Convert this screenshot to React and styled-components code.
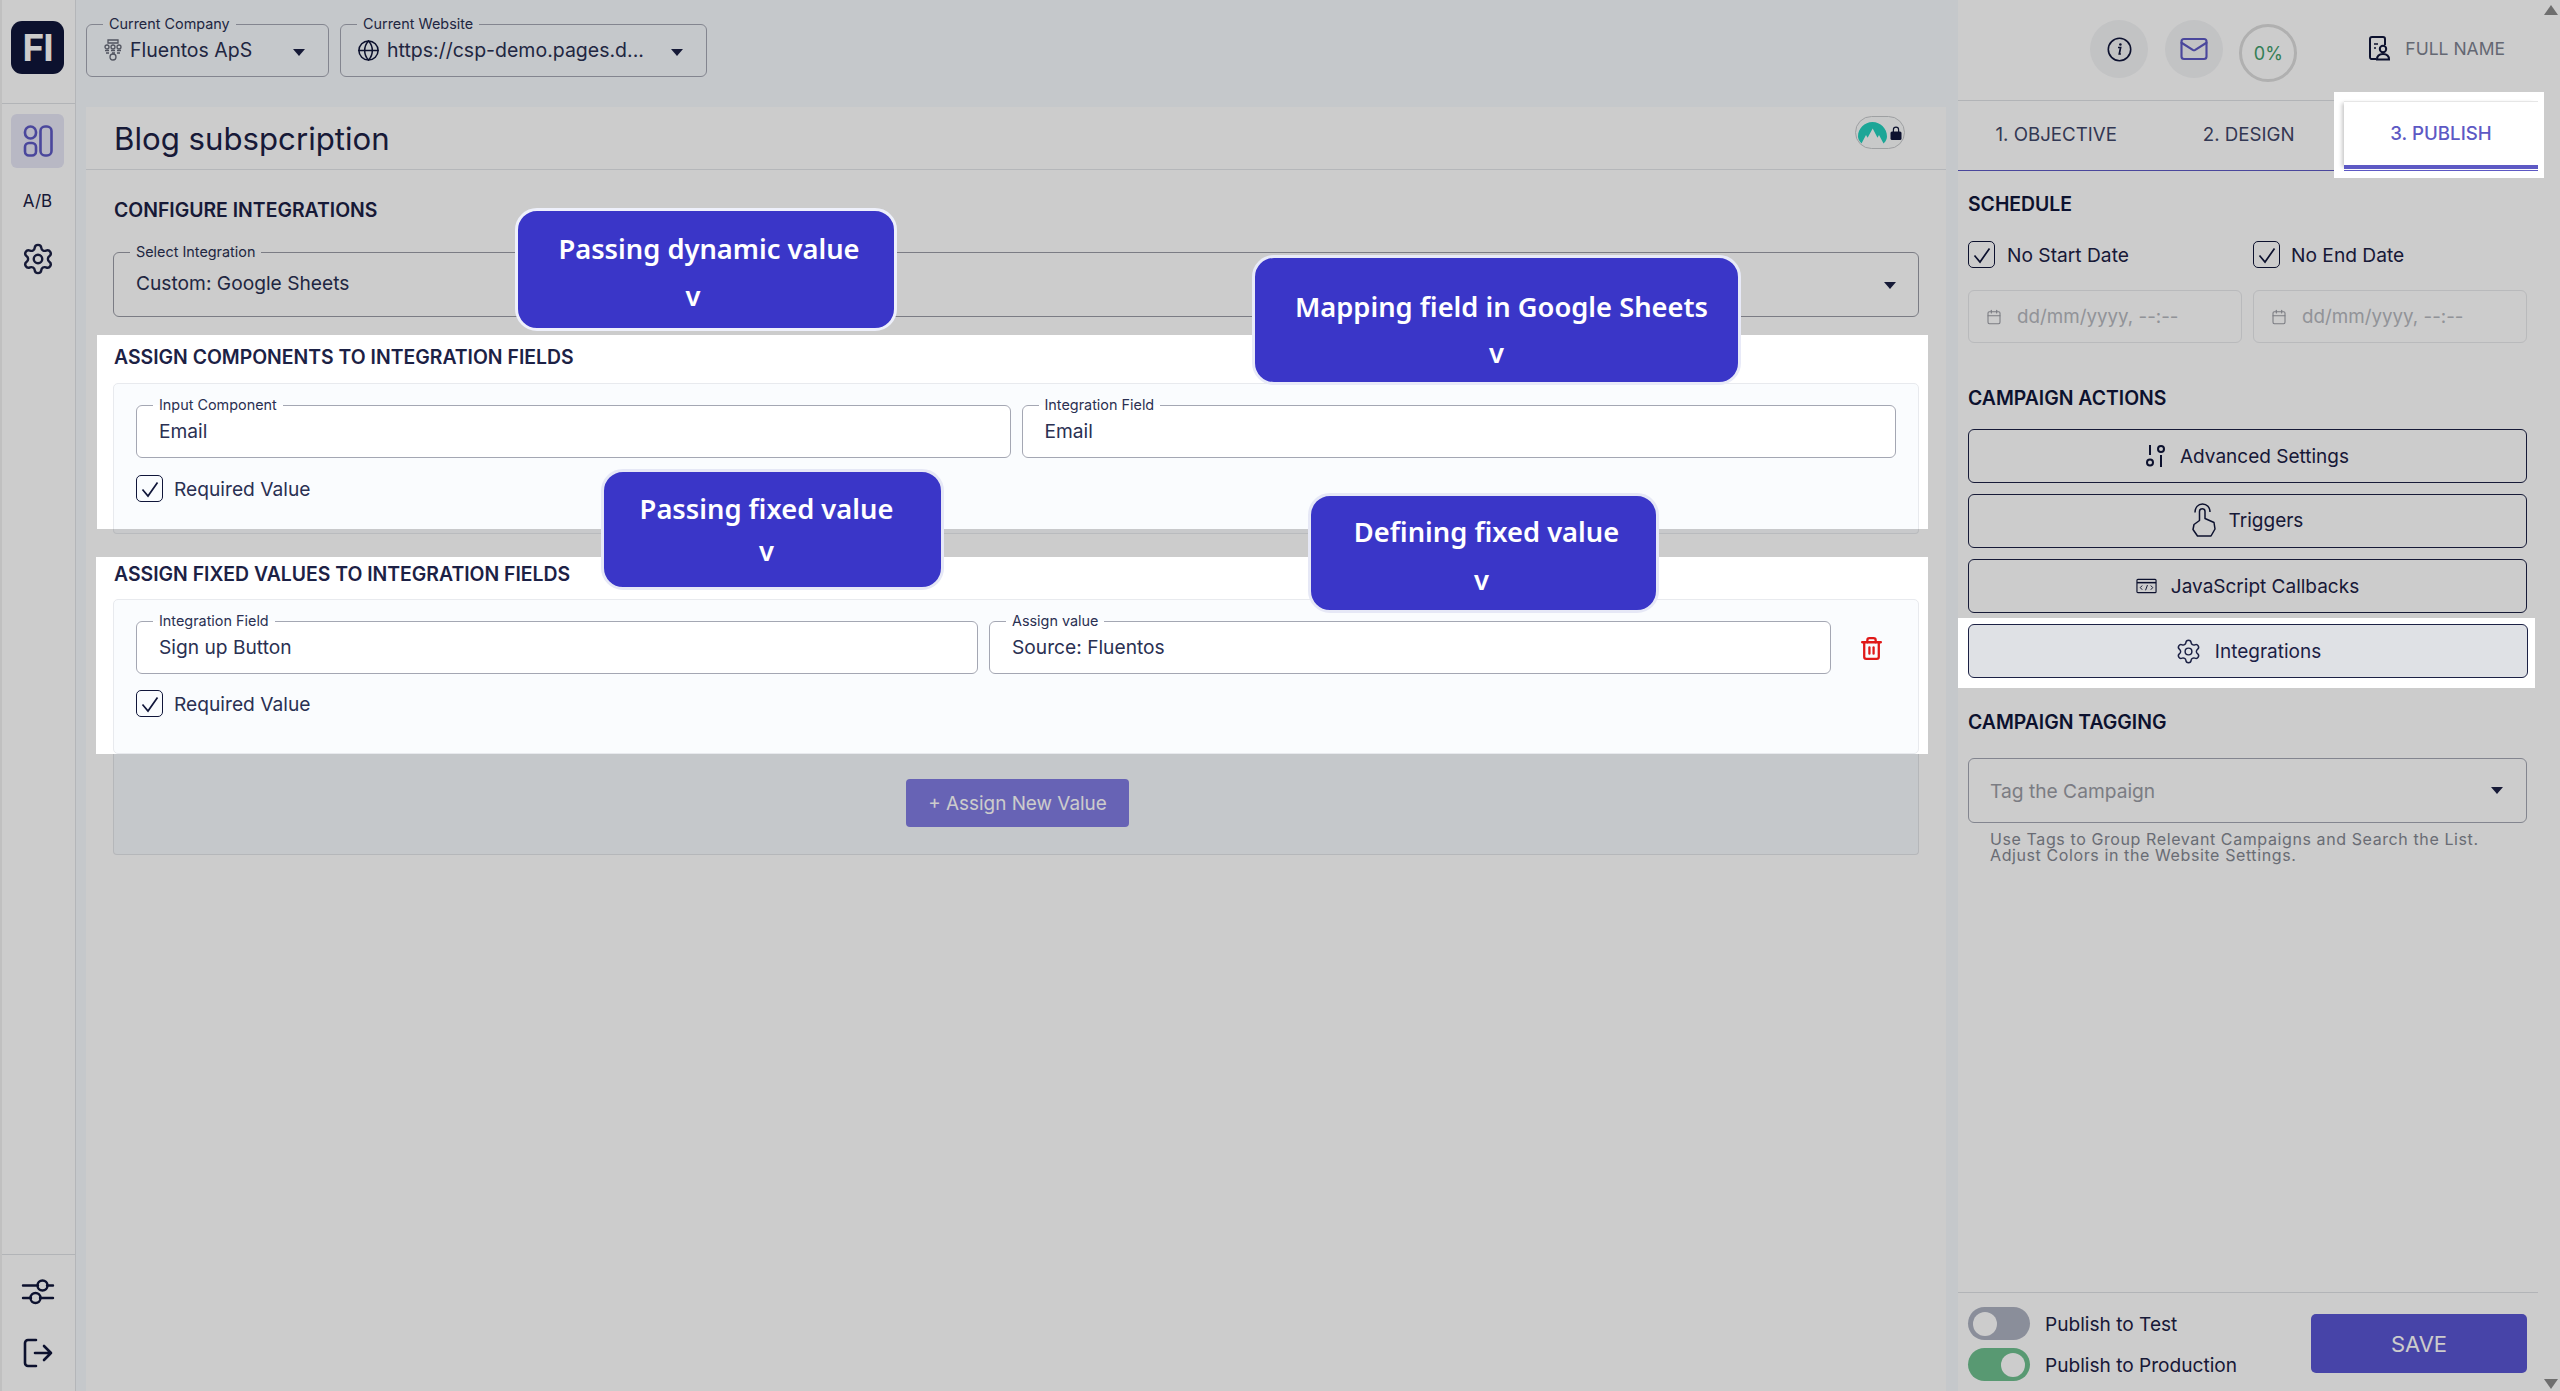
import React from "react";
import styled, { createGlobalStyle } from "styled-components";
import { Settings, Mail, Globe, Trash2, Calendar } from "lucide-react";

const Global = createGlobalStyle`
  html, body { margin: 0; padding: 0; background: #fff; }
  body { font-family: Inter, "Noto Sans", sans-serif; color: #1c2145; overflow: hidden; }
  * { box-sizing: border-box; }
  fieldset { min-width: 0; }
`;

const Page = styled.div`
  position: relative;
  width: 2560px;
  height: 1391px;
  display: flex;
  overflow: hidden;
  background: #fff;
`;
const Dim = styled.div`
  position: absolute;
  inset: 0;
  z-index: 1;
  background: rgba(0, 0, 0, 0.2);
  pointer-events: none;
`;
const Sidebar = styled.aside`
  width: 76px;
  flex: none;
  display: flex;
  flex-direction: column;
  border-left: 2px solid #f0f0f0;
  border-right: 1px solid #e2e4e8;
`;
const LogoArea = styled.div`
  height: 104px;
  padding: 21px 0 0 9px;
  border-bottom: 1px solid #dfe1e5;
`;
const Logo = styled.div`
  width: 53px;
  height: 53px;
  border-radius: 11px;
  background: #10163a;
  color: #fff;
  display: flex;
  align-items: center;
  justify-content: center;
  font-size: 37px;
  font-weight: 700;
  letter-spacing: -1px;
`;
const Nav = styled.nav`
  flex: 1;
  padding: 10px 0 0 9px;
  display: flex;
  flex-direction: column;
`;
const ActiveNav = styled.div`
  width: 53px;
  height: 54px;
  border-radius: 6px;
  background: #e6e6f6;
  display: flex;
  align-items: center;
  justify-content: center;
`;
const AbMark = styled.div`
  width: 53px;
  margin-top: 23px;
  text-align: center;
  font-size: 17px;
  line-height: 20px;
  color: #1c2145;
`;
const GearSlot = styled.div`
  width: 53px;
  margin-top: 31px;
  display: flex;
  justify-content: center;
  color: #1c2145;
`;
const SideBottom = styled.div`
  height: 137px;
  border-top: 1px solid #dfe1e5;
  padding: 23px 0 0 8px;
  display: flex;
  flex-direction: column;
  gap: 32px;
`;
const SideIcon = styled.div`
  width: 56px;
  display: flex;
  justify-content: center;
  color: #10163a;
`;

const MainColumn = styled.main`
  width: 1882px;
  flex: none;
  display: flex;
  flex-direction: column;
  background: #f7fafe;
`;
const TopBar = styled.header`
  height: 107px;
  flex: none;
  padding: 16px 0 0 10px;
  display: flex;
  align-items: flex-start;
  gap: 11px;
`;
const Field = styled.fieldset`
  margin: ${(p) => p.$mt || 0}px 0 0;
  padding: 0 16px;
  height: ${(p) => p.$h || 61}px;
  width: ${(p) => (p.$w ? `${p.$w}px` : "auto")};
  flex: ${(p) => (p.$w ? "none" : "1")};
  border: 1px solid ${(p) => p.$line || "#a4a7b3"};
  border-radius: 6px;
  background: ${(p) => p.$bg || "transparent"};
  position: relative;
`;
const Legend = styled.legend`
  padding: 0 6px;
  margin: 0;
  font-size: 14.4px;
  line-height: 16px;
  color: #2a3052;
  white-space: nowrap;
`;
const FieldBody = styled.div`
  display: flex;
  align-items: center;
  gap: 7px;
  height: ${(p) => p.$h || 36}px;
  padding-left: ${(p) => p.$pad ?? 6}px;
  font-size: ${(p) => p.$fs || 19.2}px;
  color: #2a3052;
  white-space: nowrap;
`;
const Caret = styled.span`
  position: absolute;
  right: ${(p) => p.$r}px;
  top: ${(p) => p.$t}px;
  width: 0;
  height: 0;
  border-left: 6px solid transparent;
  border-right: 6px solid transparent;
  border-top: 7px solid #1c2145;
`;

const MainCard = styled.section`
  flex: 1;
  margin: 0 12px 0 10px;
  background: #fff;
  display: flex;
  flex-direction: column;
`;
const CardHead = styled.div`
  height: 63px;
  flex: none;
  padding: 0 41px 0 28px;
  display: flex;
  align-items: center;
  justify-content: space-between;
  border-bottom: 1px solid #e3e5e9;
`;
const Title = styled.h1`
  margin: 2px 0 0;
  font-size: 31.2px;
  font-weight: 400;
  color: #1c2145;
`;
const Badge = styled.div`
  width: 50px;
  height: 33px;
  margin-top: -11px;
  border: 1.5px solid #c6c8cb;
  border-radius: 17px;
  background: #fbfcfc;
  display: flex;
  align-items: center;
  justify-content: center;
  gap: 3px;
`;
const Content = styled.div`
  padding: 0 27px;
`;
const Heading = styled.h2`
  margin: ${(p) => p.$mt || 0}px 0 0;
  font-size: 19.4px;
  line-height: 22px;
  font-weight: 600;
  color: ${(p) => p.$c || "#1c2145"};
  padding-left: ${(p) => p.$pl || 0}px;
  white-space: nowrap;
`;
const Highlight = styled.div`
  position: relative;
  z-index: 2;
  background: #fff;
  height: ${(p) => p.$h}px;
  margin: ${(p) => p.$mt}px -9px 0 -${(p) => p.$ml}px;
  padding: ${(p) => p.$pt}px 9px 0 ${(p) => p.$ml}px;
  overflow: hidden;
`;
const RowCard = styled.div`
  margin-top: ${(p) => p.$mt}px;
  height: ${(p) => p.$h}px;
  padding: 21px 22px 0;
  background: #fafcfe;
  border: 1px solid #e8eaee;
  border-radius: 5px;
  position: relative;
`;
const FieldRow = styled.div`
  display: flex;
  gap: 11px;
  align-items: flex-start;
  margin-top: -8px;
`;
const TrashSlot = styled.div`
  width: 54px;
  flex: none;
  display: flex;
  justify-content: center;
  padding: 23px 0 0 4px;
  color: #e01919;
`;
const CheckRow = styled.label`
  display: flex;
  align-items: center;
  gap: ${(p) => p.$gap || 11}px;
  margin-top: ${(p) => p.$mt || 0}px;
  font-size: 19.2px;
  color: ${(p) => p.$c || "#2a3052"};
`;
const Box = styled.span`
  width: 27px;
  height: 27px;
  flex: none;
  border: 1.5px solid #10163a;
  border-radius: 5px;
  background: transparent;
  display: flex;
  align-items: center;
  justify-content: center;
`;
const CardTail = styled.div`
  height: 5px;
  background: #fafcfe;
  border: 1px solid #e8eaee;
  border-top: 0;
  border-radius: 0 0 4px 4px;
`;
const AddBox = styled.div`
  height: 101px;
  background: #f7fafe;
  border: 1px solid #e3e5e9;
  border-top: 0;
  border-radius: 0 0 4px 4px;
  padding-top: 25px;
  display: flex;
  justify-content: center;
`;
const AddButton = styled.button`
  width: 223px;
  height: 48px;
  border: 0;
  border-radius: 4px;
  margin-left: 3px;
  background: #817ce3;
  color: #fff;
  font-family: inherit;
  font-size: 18.9px;
`;

const RightPanel = styled.aside`
  flex: 1;
  display: flex;
  background: #fff;
`;
const RightInner = styled.div`
  width: 580px;
  flex: none;
  display: flex;
  flex-direction: column;
`;
const RightTop = styled.div`
  height: 101px;
  flex: none;
  border-bottom: 1px solid #dfe1e5;
  padding: 20px 33px 0 0;
  display: flex;
  justify-content: flex-end;
  align-items: flex-start;
`;
const RoundTile = styled.div`
  width: 58px;
  height: 58px;
  margin-right: ${(p) => p.$mr}px;
  border-radius: 50%;
  background: #f3f4f6;
  display: flex;
  align-items: center;
  justify-content: center;
`;
const Progress = styled.div`
  width: 58px;
  height: 58px;
  margin-top: 4px;
  border-radius: 50%;
  border: 3px solid #dcdcdc;
  display: flex;
  align-items: center;
  justify-content: center;
  font-size: 18px;
  color: #3f9e6c;
`;
const User = styled.div`
  margin-left: 71px;
  height: 58px;
  display: flex;
  align-items: center;
  gap: 13px;
  font-size: 17.5px;
  color: #7d8290;
  white-space: nowrap;
  transform: translateY(-1px);
`;
const TabBar = styled.div`
  height: 70px;
  flex: none;
  display: flex;
  border-bottom: 1px solid #5d59c4;
`;
const Tab = styled.div`
  width: 193px;
  display: flex;
  align-items: center;
  justify-content: center;
  padding: 0 0 2px ${(p) => p.$pl}px;
  font-size: 18.7px;
  color: #3f4668;
`;
const TabGlow = styled.div`
  position: relative;
  z-index: 2;
  background: #fff;
  margin: -9px -6px -8px -1px;
  padding: 9px 6px 7px 10px;
  width: 210px;
  flex: none;
`;
const ActiveTab = styled.div`
  height: 68px;
  border-top: 1px solid #e6e6e6;
  border-bottom: 4px solid #5d59c4;
  box-shadow: -4px 0 4px -2px rgba(0, 0, 0, 0.22);
  display: flex;
  align-items: center;
  justify-content: center;
  font-size: 18.7px;
  font-weight: 500;
  color: #5d59c4;
`;
const ActiveRule = styled.div`
  height: 1px;
  margin-top: 1px;
  background: #5d59c4;
`;
const Body = styled.div`
  padding: 0 11px 0 10px;
  flex: 1;
  display: flex;
  flex-direction: column;
`;
const TwoCols = styled.div`
  display: flex;
  gap: 11px;
  margin-top: ${(p) => p.$mt}px;
`;
const Col = styled.div`
  flex: 1;
`;
const DateInput = styled.div`
  height: 53px;
  border: 1px solid #e8e9ec;
  border-radius: 6px;
  display: flex;
  align-items: center;
  gap: 15px;
  padding-left: 17px;
  font-size: 18.8px;
  color: #b6b8be;
`;
const Actions = styled.div`
  margin-top: 20px;
  display: flex;
  flex-direction: column;
  gap: 11px;
`;
const ActionButton = styled.button`
  width: 100%;
  height: 54px;
  border: 1.5px solid #1c2145;
  border-radius: 6px;
  background: ${(p) => (p.$active ? "#dfe1e5" : "transparent")};
  font-family: inherit;
  font-size: 19px;
  color: #1c2145;
  display: flex;
  align-items: center;
  justify-content: center;
  gap: ${(p) => p.$gap}px;
  padding: 0 0 ${(p) => p.$pb || 0}px;
`;
const ActionGlow = styled.div`
  position: relative;
  z-index: 2;
  background: #fff;
  margin: -6px -8px -10px -10px;
  padding: 6px 7px 10px 10px;
`;
const TagSelect = styled.div`
  position: relative;
  height: 65px;
  margin-top: 25px;
  border: 1px solid #a4a7b3;
  border-radius: 6px;
  display: flex;
  align-items: center;
  padding-left: 21px;
  font-size: 19.2px;
  color: #9a9ca4;
`;
const Help = styled.p`
  margin: 8px 0 0;
  padding-left: 22px;
  font-size: 16px;
  line-height: 16px;
  letter-spacing: 0.6px;
  color: #848892;
`;
const Footer = styled.div`
  margin-top: auto;
  height: 99px;
  flex: none;
  border-top: 1px solid #dfe1e5;
  padding: 14px 11px 0 10px;
  display: flex;
  justify-content: space-between;
`;
const ToggleStack = styled.div`
  display: flex;
  flex-direction: column;
  gap: 8px;
`;
const ToggleRow = styled.div`
  display: flex;
  align-items: center;
  gap: 15px;
  font-size: 19.1px;
  height: 33px;
  color: #1c2145;
`;
const Toggle = styled.span`
  width: 62px;
  height: 33px;
  border-radius: 17px;
  padding: 0 5px;
  display: flex;
  align-items: center;
  justify-content: ${(p) => (p.$on ? "flex-end" : "flex-start")};
  background: ${(p) => (p.$on ? "#6fc08f" : "#adb2c1")};
`;
const Knob = styled.span`
  width: 24px;
  height: 24px;
  border-radius: 50%;
  background: #fff;
`;
const SaveButton = styled.button`
  width: 216px;
  height: 59px;
  margin-top: 7px;
  border: 0;
  border-radius: 5px;
  background: #5955d2;
  color: #fff;
  font-family: inherit;
  font-size: 22px;
`;
const Scrollbar = styled.div`
  width: 15px;
  margin-left: 5px;
  padding: 5px 0 2px;
  display: flex;
  flex-direction: column;
  justify-content: space-between;
  align-items: center;
`;
const Arrow = styled.span`
  width: 0;
  height: 0;
  border-left: 7px solid transparent;
  border-right: 7px solid transparent;
  border-${(p) => (p.$up ? "bottom" : "top")}: 10px solid #8a8a8a;
`;
const Callout = styled.div`
  position: absolute;
  z-index: 3;
  left: ${(p) => p.$x}px;
  top: ${(p) => p.$y}px;
  width: ${(p) => p.$w}px;
  height: ${(p) => p.$h}px;
  border: 3px solid ${(p) => p.$edge};
  border-radius: 22px;
  background: #3a36c8;
  color: #fff;
  font-family: "Noto Sans", "Open Sans", sans-serif;
  font-weight: 600;
  font-size: 27.3px;
  text-align: center;
  white-space: nowrap;
`;
const CalloutLine = styled.div`
  position: absolute;
  top: ${(p) => p.$top}px;
  left: 0;
  right: 0;
  line-height: 34px;
  padding: 0 ${(p) => (p.$shift < 0 ? -2 * p.$shift : 0)}px 0 ${(p) => (p.$shift > 0 ? 2 * p.$shift : 0)}px;
`;

const Check = () => (
  <svg width="20" height="20" viewBox="0 0 20 20" fill="none" stroke="#10163a" strokeWidth="1.7">
    <path d="M2.5 10.5 L8 17 L17.5 3.5" />
  </svg>
);
const ComboIcon = () => (
  <svg width="34" height="34" viewBox="0 0 34 34" fill="none" stroke="#5d59c4" strokeWidth="2.6">
    <rect x="4" y="2.5" width="11" height="12" rx="5.5" />
    <rect x="4" y="19" width="11" height="12.5" rx="4" />
    <rect x="19.5" y="2.5" width="11" height="29" rx="4.5" />
  </svg>
);
const SlidersIcon = () => (
  <svg width="34" height="28" viewBox="0 0 34 28" fill="none" stroke="currentColor" strokeWidth="2.4" strokeLinecap="round">
    <path d="M2 7.5h15M26 7.5h6M2 20h8M19 20h13" />
    <circle cx="21.5" cy="7.5" r="5" />
    <circle cx="14.500" cy="20" r="5" />
  </svg>
);
const LogoutIcon = () => (
  <svg width="32" height="30" viewBox="0 0 32 30" fill="none" stroke="currentColor" strokeWidth="2.6" strokeLinecap="round" strokeLinejoin="round">
    <path d="M14 2H6a3 3 0 0 0-3 3v20a3 3 0 0 0 3 3h8" />
    <path d="M13 15h16M22 8l7 7-7 7" />
  </svg>
);
const OrgIcon = () => (
  <svg width="20" height="24" viewBox="0 0 20 24" fill="none" stroke="#666a78" strokeWidth="1.3">
    <path d="M5 2h10v3H5z" />
    <circle cx="4" cy="9" r="2" />
    <circle cx="10" cy="9" r="2" />
    <circle cx="16" cy="9" r="2" />
    <path d="M2 12.500h4M8 12.500h4M14 12.500h4M3 15h3M9 15h3M14 15h3" />
    <circle cx="10" cy="19" r="3" />
  </svg>
);
const InfoIcon = () => (
  <svg width="25" height="25" viewBox="0 0 25 25" fill="none">
    <circle cx="12.500" cy="12.500" r="11.200" stroke="#10163a" strokeWidth="1.6" />
    <path d="M11 10.500h2.600l-1.300 6.500h1.600" stroke="#10163a" strokeWidth="1.7" />
    <circle cx="13.400" cy="7.500" r="1.300" fill="#10163a" />
  </svg>
);
const UserDocIcon = () => (
  <svg width="24" height="25" viewBox="0 0 24 25" fill="none" stroke="#10163a" strokeWidth="2">
    <path d="M8 23H3a2 2 0 0 1-1-2V3a2 2 0 0 1 2-2h11a2 2 0 0 1 2 2v6" />
    <path d="M6 8h4M6 12h2" strokeWidth="1.6" />
    <circle cx="15" cy="13" r="3.200" />
    <path d="M9 23.500c0-4 2.400-5.500 6-5.500s6 1.500 6 5.500z" />
  </svg>
);
const KnobsIcon = () => (
  <svg width="20" height="24" viewBox="0 0 20 24" fill="none" stroke="#10163a" strokeWidth="2">
    <path d="M4 1v10M15 11v12" />
    <circle cx="4" cy="18.500" r="3" />
    <circle cx="15" cy="5" r="3" />
  </svg>
);
const TouchIcon = () => (
  <svg width="24" height="34" viewBox="0 0 24 34" fill="none" stroke="#10163a" strokeWidth="1.5" strokeLinejoin="round">
    <path d="M3 9.500C3 4.500 6 1 10.500 1S18 4.500 18 9" />
    <path d="M7.500 17.500V8.500c0-3.600 5.500-3.600 5.500 0v7l9 4 1 6.500-4 7H5.500L1 26.500l1-5 5.500-4z" />
  </svg>
);
const CodeWindowIcon = () => (
  <svg width="21" height="16" viewBox="0 0 22 16" fill="none" stroke="#10163a" strokeWidth="1.2">
    <rect x="1" y="1" width="20" height="14" rx="1" />
    <path d="M1 4.500h20" strokeWidth="1.6" />
    <path d="M6.500 7.500l-2 2.200 2 2.200M15.500 7.500l2 2.200-2 2.200M12 7l-2 5.500" strokeWidth="1" />
  </svg>
);
const PeakIcon = () => (
  <svg width="29" height="22" viewBox="0 0 29 22" fill="#24d0bd">
    <path d="M3.500 21.500C0.500 18.500 0 16 0 14.500 0 6.500 6.500 0 14.500 0S29 6.500 29 14.500c0 2-.7 4.500-3.500 7L21 13l-1.500 2.700L14.700 6.500 9.600 15.800 8 13z" />
  </svg>
);
const LockIcon = () => (
  <svg width="12" height="14" viewBox="0 0 12 14" fill="#10163a">
    <rect x="0.500" y="5.500" width="11" height="8.500" rx="1.500" />
    <path d="M2.800 6V3.800a3.200 3.200 0 0 1 6.400 0V6H8V3.800a2 2 0 0 0-4 0V6z" />
  </svg>
);

const callouts = [
  { x: 515, y: 208, w: 382, h: 123, edge: "#eef0fb", a: "Passing dynamic value", b: "v", ta: 21, tb: 68, sa: 3, sb: -13 },
  { x: 1252, y: 255, w: 489, h: 130, edge: "#e8eaf8", a: "Mapping field in Google Sheets", b: "v", ta: 32, tb: 78, sa: 5, sb: 0 },
  { x: 601, y: 469, w: 343, h: 121, edge: "#e6e8f6", a: "Passing fixed value", b: "v", ta: 20, tb: 62, sa: -6, sb: -6 },
  { x: 1308, y: 493, w: 351, h: 120, edge: "#e6e8f6", a: "Defining fixed value", b: "v", ta: 19, tb: 67, sa: 3, sb: -2 },
];

export default function App() {
  return (
    <Page>
      <Global />
      <Sidebar>
        <LogoArea>
          <Logo>FI</Logo>
        </LogoArea>
        <Nav>
          <ActiveNav>
            <ComboIcon />
          </ActiveNav>
          <AbMark>A/B</AbMark>
          <GearSlot>
            <Settings size={34} strokeWidth={1.7} />
          </GearSlot>
        </Nav>
        <SideBottom>
          <SideIcon>
            <SlidersIcon />
          </SideIcon>
          <SideIcon>
            <LogoutIcon />
          </SideIcon>
        </SideBottom>
      </Sidebar>

      <MainColumn>
        <TopBar>
          <Field $w={243}>
            <Legend>Current Company</Legend>
            <FieldBody $pad={0} $fs={19.5}>
              <OrgIcon />
              Fluentos ApS
            </FieldBody>
            <Caret $r={23} $t={17} />
          </Field>
          <Field $w={367}>
            <Legend>Current Website</Legend>
            <FieldBody $pad={0} $fs={19.5}>
              <Globe size={23} strokeWidth={1.6} color="#10163a" />
              https://csp-demo.pages.d...
            </FieldBody>
            <Caret $r={23} $t={17} />
          </Field>
        </TopBar>

        <MainCard>
          <CardHead>
            <Title>Blog subspcription</Title>
            <Badge>
              <PeakIcon />
              <LockIcon />
            </Badge>
          </CardHead>
          <Content>
            <Heading $mt={29} $pl={1}>CONFIGURE INTEGRATIONS</Heading>
            <Field $h={73} $mt={23} $line="#9a9ca6">
              <Legend>Select Integration</Legend>
              <FieldBody $h={46}>Custom: Google Sheets</FieldBody>
              <Caret $r={22} $t={22} />
            </Field>

            <Highlight $mt={18} $h={194} $ml={16} $pt={11}>
              <Heading $pl={1}>ASSIGN COMPONENTS TO INTEGRATION FIELDS</Heading>
              <RowCard $mt={15} $h={156}>
                <FieldRow>
                  <Field $bg="#fff">
                    <Legend>Input Component</Legend>
                    <FieldBody>Email</FieldBody>
                  </Field>
                  <Field $bg="#fff">
                    <Legend>Integration Field</Legend>
                    <FieldBody>Email</FieldBody>
                  </Field>
                </FieldRow>
                <CheckRow $mt={17}>
                  <Box>
                    <Check />
                  </Box>
                  Required Value
                </CheckRow>
              </RowCard>
            </Highlight>
            <CardTail />

            <Highlight $mt={23} $h={197} $ml={17} $pt={6}>
              <Heading $pl={1}>ASSIGN FIXED VALUES TO INTEGRATION FIELDS</Heading>
              <RowCard $mt={14} $h={155}>
                <FieldRow>
                  <Field $bg="#fff">
                    <Legend>Integration Field</Legend>
                    <FieldBody>Sign up Button</FieldBody>
                  </Field>
                  <Field $bg="#fff">
                    <Legend>Assign value</Legend>
                    <FieldBody>Source: Fluentos</FieldBody>
                  </Field>
                  <TrashSlot>
                    <Trash2 size={25} strokeWidth={2.2} />
                  </TrashSlot>
                </FieldRow>
                <CheckRow $mt={16}>
                  <Box>
                    <Check />
                  </Box>
                  Required Value
                </CheckRow>
              </RowCard>
            </Highlight>
            <AddBox>
              <AddButton>+ Assign New Value</AddButton>
            </AddBox>
          </Content>
        </MainCard>
      </MainColumn>

      <RightPanel>
        <RightInner>
          <RightTop>
            <RoundTile $mr={17}>
              <InfoIcon />
            </RoundTile>
            <RoundTile $mr={16}>
              <Mail size={30} strokeWidth={1.7} color="#5d59c4" />
            </RoundTile>
            <Progress>0%</Progress>
            <User>
              <UserDocIcon />
              FULL NAME
            </User>
          </RightTop>
          <TabBar>
            <Tab $pl={8}>1. OBJECTIVE</Tab>
            <Tab $pl={16}>2. DESIGN</Tab>
            <TabGlow>
              <ActiveTab>3. PUBLISH</ActiveTab>
              <ActiveRule />
            </TabGlow>
          </TabBar>
          <Body>
            <Heading $mt={22} $c="#10163a">SCHEDULE</Heading>
            <TwoCols $mt={26}>
              <Col>
                <CheckRow $gap={12} $c="#1c2145">
                  <Box>
                    <Check />
                  </Box>
                  No Start Date
                </CheckRow>
              </Col>
              <Col>
                <CheckRow $gap={11} $c="#1c2145">
                  <Box>
                    <Check />
                  </Box>
                  No End Date
                </CheckRow>
              </Col>
            </TwoCols>
            <TwoCols $mt={22}>
              <Col>
                <DateInput>
                  <Calendar size={16} strokeWidth={1.6} color="#9a9ca4" />
                  dd/mm/yyyy, --:--
                </DateInput>
              </Col>
              <Col>
                <DateInput>
                  <Calendar size={16} strokeWidth={1.6} color="#9a9ca4" />
                  dd/mm/yyyy, --:--
                </DateInput>
              </Col>
            </TwoCols>
            <Heading $mt={44} $c="#10163a">CAMPAIGN ACTIONS</Heading>
            <Actions>
              <ActionButton $gap={14}>
                <KnobsIcon />
                Advanced Settings
              </ActionButton>
              <ActionButton $gap={13} $pb={2}>
                <TouchIcon />
                Triggers
              </ActionButton>
              <ActionButton $gap={14}>
                <CodeWindowIcon />
                JavaScript Callbacks
              </ActionButton>
              <ActionGlow>
                <ActionButton $gap={13} $active>
                  <Settings size={27} strokeWidth={1.3} />
                  Integrations
                </ActionButton>
              </ActionGlow>
            </Actions>
            <Heading $mt={33} $c="#10163a">CAMPAIGN TAGGING</Heading>
            <TagSelect>
              Tag the Campaign
              <Caret $r={23} $t={28} />
            </TagSelect>
            <Help>
              Use Tags to Group Relevant Campaigns and Search the List.
              <br />
              Adjust Colors in the Website Settings.
            </Help>
          </Body>
          <Footer>
            <ToggleStack>
              <ToggleRow>
                <Toggle>
                  <Knob />
                </Toggle>
                Publish to Test
              </ToggleRow>
              <ToggleRow>
                <Toggle $on>
                  <Knob />
                </Toggle>
                Publish to Production
              </ToggleRow>
            </ToggleStack>
            <SaveButton>SAVE</SaveButton>
          </Footer>
        </RightInner>
        <Scrollbar>
          <Arrow $up />
          <Arrow />
        </Scrollbar>
      </RightPanel>

      <Dim />
      {callouts.map((c) => (
        <Callout key={c.a} $x={c.x} $y={c.y} $w={c.w} $h={c.h} $edge={c.edge}>
          <CalloutLine $top={c.ta} $shift={c.sa}>{c.a}</CalloutLine>
          <CalloutLine $top={c.tb} $shift={c.sb}>{c.b}</CalloutLine>
        </Callout>
      ))}
    </Page>
  );
}
